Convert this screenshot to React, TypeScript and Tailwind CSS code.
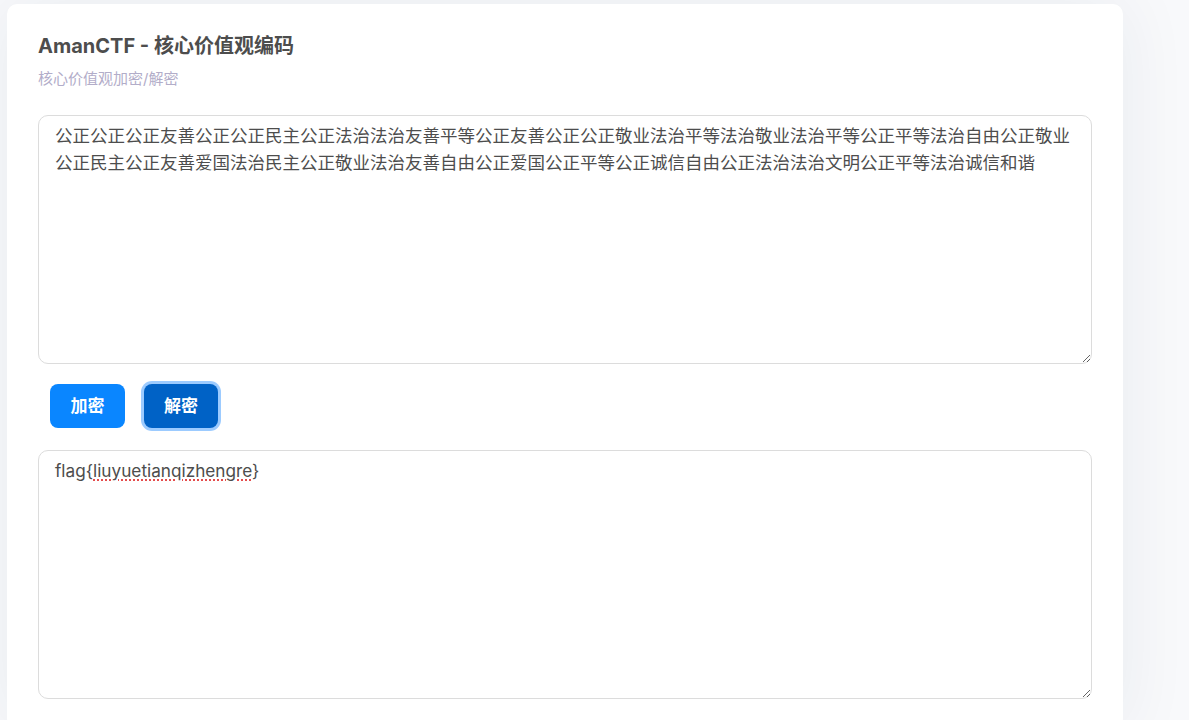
import { useState } from "react";

const cipher =
  "公正公正公正友善公正公正民主公正法治法治友善平等公正友善公正公正敬业法治平等法治敬业法治平等公正平等法治自由公正敬业公正民主公正友善爱国法治民主公正敬业法治友善自由公正爱国公正平等公正诚信自由公正法治法治文明公正平等法治诚信和谐";

export default function App() {
  const [input, setInput] = useState(cipher);

  return (
    <div
      className="min-h-screen bg-[#f8f9fb] pt-[4px] pl-[7px]"
      style={{ fontFamily: 'Inter, "Noto Sans CJK SC", sans-serif' }}
    >
      <div className="w-[1116px] bg-white rounded-[10px] shadow-[0_0_70px_rgba(30,40,80,0.07)] px-[31px] pt-[28px] pb-[30px]">
        <h1 className="text-[20px] leading-7 font-bold text-[#4d4d4d]">
          AmanCTF - 核心价值观编码
        </h1>
        <p className="mt-[9px] text-[15px] leading-5 text-[#b2adc9]">
          核心价值观加密/解密
        </p>

        <textarea
          value={input}
          onChange={(e) => setInput(e.target.value)}
          spellCheck={false}
          className="mt-[26px] block w-full h-[249px] border border-[#dcdcdc] rounded-[10px] px-4 py-[7px] text-[17.5px] leading-[26.5px] text-[#4d4d4d] outline-none resize"
        />

        <div className="flex gap-[19px] pl-3 mt-[20px] mb-[22px]">
          <button className="w-[75px] h-[44px] pt-[2px] rounded-[8px] bg-[#0a86ff] text-white font-bold text-[17px]">
            加密
          </button>
          <button className="w-[74px] h-[44px] pt-[2px] rounded-[8px] bg-[#0062c6] text-white font-bold text-[17px] ring-[3px] ring-[#9ccbff]">
            解密
          </button>
        </div>

        <div className="w-full h-[249px] border border-[#dcdcdc] rounded-[10px] px-4 py-[7px] text-[17.2px] leading-[26.5px] text-[#4d4d4d] resize overflow-auto">
          flag{"{"}
          <span className="underline decoration-dotted decoration-[#e03030] underline-offset-[3px]">
            liuyuetianqizhengre
          </span>
          {"}"}
        </div>
      </div>
    </div>
  );
}
